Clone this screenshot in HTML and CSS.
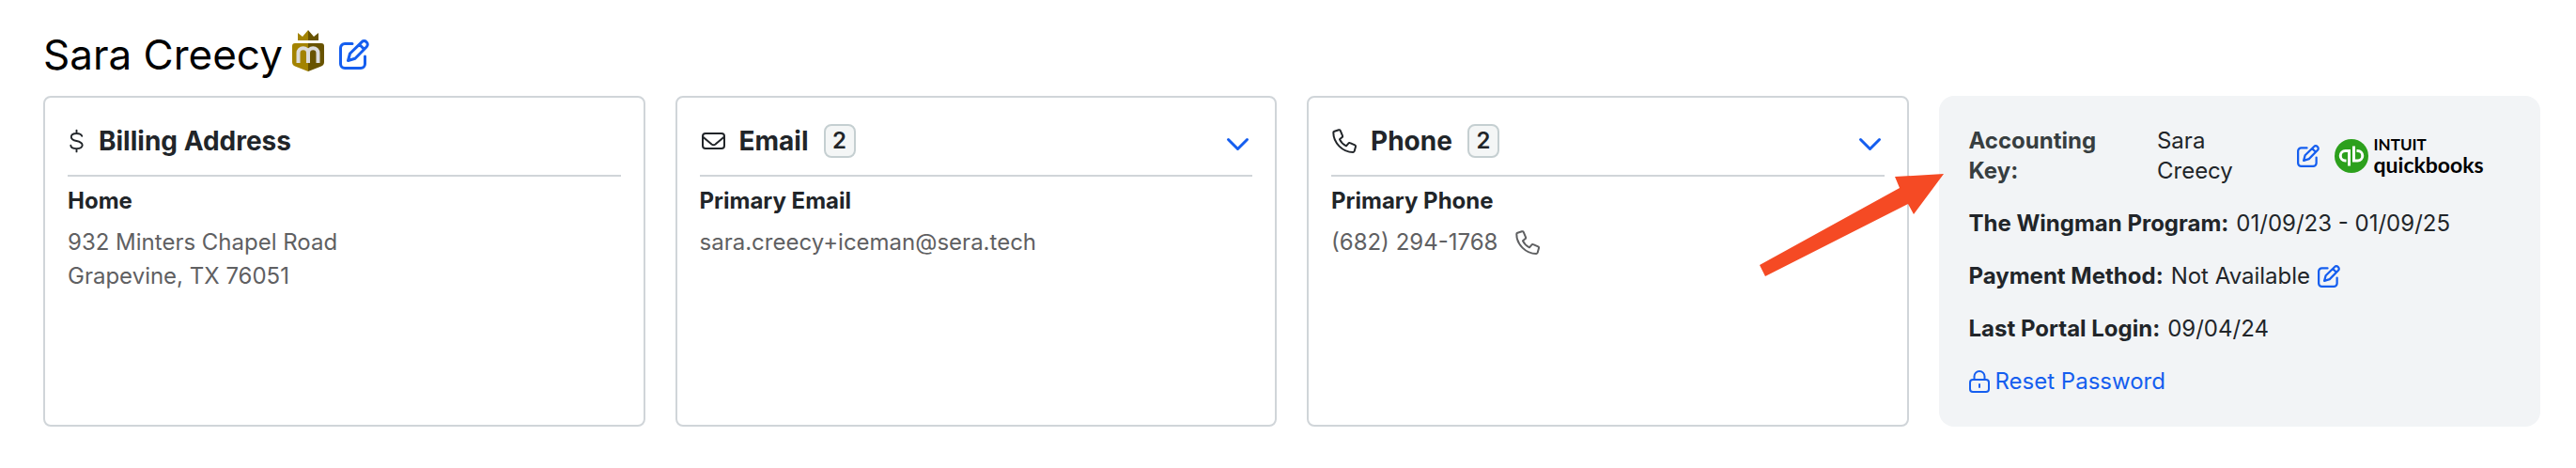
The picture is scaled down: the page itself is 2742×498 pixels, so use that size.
FILE: index.html
```html
<!DOCTYPE html>
<html lang="en">
<head>
  <meta charset="UTF-8" />
  <meta name="viewport" content="width=device-width, initial-scale=1" />
  <title>Sara Creecy</title>
  <link rel="stylesheet" href="styles.css">
</head>
<body>
  <!-- shared icons -->
  <svg class="sprite" aria-hidden="true">
    <symbol id="icon-edit" viewBox="0 0 32 32">
      <path d="M14 4.500H6A4.500 4.500 0 0 0 1.500 9v17A4.500 4.500 0 0 0 6 30.500h17a4.500 4.500 0 0 0 4.500-4.500V18" />
      <path d="M9.500 22.500l2-7.500L24.200 2.600a3.300 3.300 0 0 1 4.700 0l.4.400a3.300 3.300 0 0 1 0 4.700L17 20.200zM21.500 5.300l5 5" />
    </symbol>
    <symbol id="icon-phone" viewBox="0 0 28 28">
      <path d="M3.400 3.700L8 2.300c.8-.2 1.500.1 1.800.8l2.200 5.200c.3.700.1 1.400-.4 1.800L9 12.300c1.500 3.200 3.800 5.400 7 7l2.300-2.700c.4-.6 1.200-.8 1.800-.5l5.100 2.300c.7.300 1 1 .8 1.700l-1.300 4.700c-.2.700-.7 1.100-1.400 1.100C12 25.900 2.300 16 2.300 5.100c0-.7.400-1.200 1.100-1.400z" />
    </symbol>
    <symbol id="icon-chevron" viewBox="0 0 32 32">
      <path d="M6.500 14.500l10 10 10-10" />
    </symbol>
  </svg>

  <div class="page">
    <div class="title-row">
      <h1>Sara Creecy</h1>
      <svg class="member-badge" viewBox="0 0 34 44" aria-label="Member">
        <path fill="#a38300" d="M6 11V3l5 4 6-7v11zM17 14H3a3 3 0 0 0-3 3v17q0 3 3 4.500L17 44z" />
        <path fill="#685300" d="M28 11V3l-5 4-6-7v11zM17 14h14a3 3 0 0 1 3 3v17q0 3-3 4.500L17 44z" />
        <path class="member-mark" d="M6.500 35V24.500a5.200 5.200 0 0 1 10.500 0V35M17 24.500a5.200 5.200 0 0 1 10.500 0V35" />
      </svg>
      <button class="icon-btn" aria-label="Edit customer"><svg class="edit-large"><use href="#icon-edit" /></svg></button>
    </div>

    <div class="cards">
      <section class="card">
        <div class="card-header">
          <svg class="icon-dollar" viewBox="0 0 20 28">
            <path d="M10 2v3.500M10 22.500V26M16 8.500Q15 5.500 10 5.500q-6 0-6 4 0 3.300 6 4.500t6.500 4.500q0 4-6.500 4T3.500 19" />
          </svg>
          <h2>Billing Address</h2>
        </div>
        <h3>Home</h3>
        <p>932 Minters Chapel Road<br>Grapevine, TX 76051</p>
      </section>

      <section class="card">
        <div class="card-header">
          <svg class="icon" viewBox="0 0 28 28">
            <rect x="3" y="6" width="23" height="16" rx="3" />
            <path d="M3 9.500l9.500 8q2 1.500 4 0l9.500-8" />
          </svg>
          <h2>Email</h2>
          <span class="count">2</span>
          <button class="icon-btn toggle" aria-label="Show all emails"><svg class="chevron"><use href="#icon-chevron" /></svg></button>
        </div>
        <h3>Primary Email</h3>
        <p>sara.creecy+iceman@sera.tech</p>
      </section>

      <section class="card">
        <div class="card-header">
          <svg class="icon"><use href="#icon-phone" /></svg>
          <h2>Phone</h2>
          <span class="count">2</span>
          <button class="icon-btn toggle" aria-label="Show all phones"><svg class="chevron"><use href="#icon-chevron" /></svg></button>
        </div>
        <h3>Primary Phone</h3>
        <p class="phone-line">(682) 294-1768 <svg class="icon"><use href="#icon-phone" /></svg></p>
      </section>

      <section class="panel">
        <div class="accounting">
          <strong>Accounting Key:</strong>
          <span class="accounting-name">Sara Creecy</span>
          <button class="icon-btn" aria-label="Edit accounting key"><svg class="edit-small"><use href="#icon-edit" /></svg></button>
          <div class="quickbooks">
            <svg class="qb-mark" viewBox="0 0 36 36">
              <circle cx="18" cy="18" r="18" fill="#2ca01c" />
              <path d="M15.500 28.500V12.500H11.500a5.200 5.200 0 0 0 0 10.500h1M20.500 7.500V23H24.500a5.200 5.200 0 0 0 0-10.500h-1" />
            </svg>
            <div class="qb-text">
              <span class="qb-intuit">INTUIT</span>
              <span class="qb-name">quickbooks</span>
            </div>
          </div>
        </div>
        <div class="row"><strong>The Wingman Program:</strong> <span>01/09/23 - 01/09/25</span></div>
        <div class="row">
          <strong>Payment Method:</strong> <span>Not Available</span>
          <button class="icon-btn" aria-label="Edit payment method"><svg class="edit-small"><use href="#icon-edit" /></svg></button>
        </div>
        <div class="row"><strong>Last Portal Login:</strong> <span>09/04/24</span></div>
        <a class="row reset" href="#">
          <svg class="icon-lock" viewBox="0 0 22 24">
            <rect x="1" y="10" width="20" height="13" rx="3" />
            <path d="M5.500 10V6.500a5.500 5.500 0 0 1 11 0V10M11 15v3" />
          </svg>
          Reset Password
        </a>

        <svg class="arrow" viewBox="0 0 200 112">
          <path d="M1 98L150 16l-5-12 52-3-32 43-6-11L7 110z" />
        </svg>
      </section>
    </div>
  </div>
</body>
</html>
```
FILE: styles.css
```css
* {
  box-sizing: border-box;
}

body {
  margin: 0;
  font-family: Inter, sans-serif;
  font-size: 24px;
  line-height: 32px;
  color: #212529;
  background-color: #fff;
}

h1, h2, h3, p {
  margin: 0;
}

strong, h2, h3 {
  font-weight: 700;
}

svg {
  display: block;
  flex: none;
  fill: none;
  stroke: currentColor;
  stroke-width: 2;
  stroke-linecap: round;
  stroke-linejoin: round;
}

.sprite {
  position: absolute;
  width: 0;
  height: 0;
}

.page {
  padding: 32px 38px 44px 46px;
}

.title-row {
  display: flex;
  align-items: center;
  margin-bottom: 18px;
}

h1 {
  font-size: 44px;
  line-height: 52px;
  font-weight: 400;
  color: #000;
}

.member-badge {
  width: 34px;
  height: 44px;
  margin: 0 16px 8px 10px;
  stroke: none;
}

.member-mark {
  stroke: #dcdcdc;
  stroke-width: 4;
  stroke-linecap: butt;
}

.icon-btn {
  padding: 0;
  border: 0;
  background: none;
  color: #155eef;
  cursor: pointer;
}

.edit-large {
  width: 32px;
  height: 32px;
  stroke-width: 3;
}

.edit-small {
  width: 24px;
  height: 24px;
  stroke-width: 3;
}

.cards {
  display: grid;
  grid-template-columns: repeat(4, 1fr);
  gap: 32px;
}

.card {
  padding: 28px 24px;
  border: 2px solid #d0d5d9;
  border-radius: 8px;
}

.card-header {
  display: flex;
  align-items: center;
  gap: 14px;
  padding-bottom: 18px;
  margin-bottom: 8px;
  border-bottom: 2px solid #d0d5d9;
}

h2 {
  font-size: 28px;
  line-height: 36px;
}

.icon {
  width: 28px;
  height: 28px;
}

.icon-dollar {
  width: 19px;
  height: 28px;
}

.count {
  width: 34px;
  height: 36px;
  margin-left: 2px;
  border: 2px solid #c5cfd1;
  border-radius: 8px;
  background-color: #f4f6f6;
  font-weight: 600;
  text-align: center;
}

.toggle {
  margin-left: auto;
}

.chevron {
  width: 32px;
  height: 32px;
  stroke-width: 3;
}

h3 {
  font-size: 24px;
  line-height: 36px;
}

.card p {
  margin-top: 8px;
  line-height: 36px;
  color: #5f6062;
}

.phone-line {
  display: flex;
  align-items: center;
  gap: 18px;
}

.panel {
  position: relative;
  display: flex;
  flex-direction: column;
  gap: 24px;
  padding: 32px;
  border-radius: 16px;
  background-color: #f2f4f6;
}

.accounting {
  display: grid;
  grid-template-columns: 32% 23% auto 1fr;
  column-gap: 16px;
  align-items: center;
}

.accounting strong {
  padding-right: 32px;
  color: #373e40;
}

.accounting-name {
  padding-right: 32px;
}

.quickbooks {
  display: flex;
  align-items: center;
  gap: 6px;
  font-family: Lato, sans-serif;
  font-weight: 700;
  color: #000;
}

.qb-mark {
  width: 36px;
  height: 36px;
  stroke: #fff;
  stroke-width: 3;
  stroke-linecap: butt;
  stroke-linejoin: miter;
}

.qb-mark circle {
  stroke: none;
}

.qb-text {
  display: flex;
  flex-direction: column;
}

.qb-intuit {
  font-size: 17px;
  line-height: 18px;
}

.qb-name {
  font-size: 23px;
  line-height: 24px;
}

.row {
  display: flex;
  align-items: center;
  gap: 8px;
}

.reset {
  gap: 6px;
  color: #155eef;
  text-decoration: none;
}

.icon-lock {
  width: 22px;
  height: 24px;
}

/* pointer over the gap between the phone card and the panel */
.arrow {
  position: absolute;
  top: 82px;
  left: -192px;
  width: 200px;
  height: 112px;
  fill: #f54a24;
  stroke: none;
}
```
